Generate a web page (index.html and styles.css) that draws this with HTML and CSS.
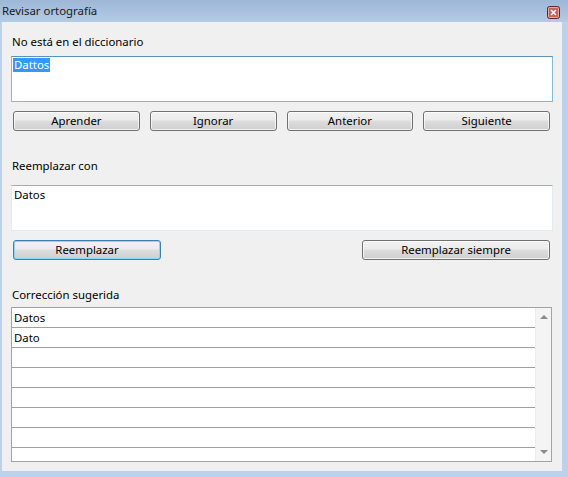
FILE: index.html
```html
<!DOCTYPE html>
<html lang="es">
<head>
<meta charset="utf-8">
<title>Revisar ortografía</title>
<link rel="stylesheet" href="styles.css">
</head>
<body>
<div class="window">
  <div class="titlebar">
    <span class="title">Revisar ortografía</span>
    <span class="close" aria-label="Cerrar">
      <svg width="13" height="13" viewBox="0 0 13 13">
        <rect x="0.5" y="0.5" width="12" height="12" rx="2" fill="#c9625a" stroke="#5a2a32"/>
        <rect x="1.5" y="1.5" width="10" height="10" rx="1" fill="none" stroke="#e9a79d"/>
        <path d="M4 4 L9 9 M9 4 L4 9" stroke="#ffffff" stroke-width="1.6"/>
      </svg>
    </span>
  </div>
  <div class="client">
    <div class="label first">No está en el diccionario</div>
    <div class="textbox focused"><span class="sel">Dattos</span></div>
    <div class="btnrow four">
      <button class="btn">Aprender</button>
      <button class="btn">Ignorar</button>
      <button class="btn">Anterior</button>
      <button class="btn">Siguiente</button>
    </div>
    <div class="label">Reemplazar con</div>
    <div class="textbox second">Datos</div>
    <div class="btnrow two">
      <button class="btn default">Reemplazar</button>
      <button class="btn wide">Reemplazar siempre</button>
    </div>
    <div class="label">Corrección sugerida</div>
    <div class="list">
      <div class="rows">
        <div class="row">Datos</div>
        <div class="row">Dato</div>
        <div class="row"></div>
        <div class="row"></div>
        <div class="row"></div>
        <div class="row"></div>
        <div class="row"></div>
        <div class="row last"></div>
      </div>
      <div class="scrollbar">
        <span class="arrow up"></span>
        <span class="arrow down"></span>
      </div>
    </div>
  </div>
</div>
</body>
</html>
```
FILE: styles.css
```css
* { box-sizing: border-box; }
html, body { margin: 0; padding: 0; }
body {
  width: 568px;
  height: 477px;
  overflow: hidden;
  font-family: "Noto Sans", "Open Sans", sans-serif;
  font-size: 11.4px;
  color: #000;
}
.window {
  width: 568px;
  height: 477px;
  background: #bcd2ea;
  display: flex;
  flex-direction: column;
}
.titlebar {
  height: 22px;
  background: linear-gradient(#9db7d6, #b4cbe6);
  display: flex;
  align-items: center;
  justify-content: space-between;
  padding: 0 8px 0 2px;
}
.title {
  color: #1a1a1a;
  line-height: 16px;
}
.close {
  display: flex;
  margin-top: 3px;
}
.client {
  margin: 0 6px 6px 2px;
  flex: 1;
  background: #f0f0f0;
  padding: 0 9px;
  display: flex;
  flex-direction: column;
}
.label {
  line-height: 16px;
  height: 16px;
  padding-left: 1px;
  margin-top: 27px;
  color: #000;
}
.label.first { margin-top: 12px; }
.textbox {
  margin-top: 6px;
  height: 46px;
  background: #fff;
  border: 1px solid #e3e9ef;
  border-top-color: #abadb3;
  padding: 1px 1px;
  line-height: 14px;
}
.textbox.focused {
  border-color: #8bb5d9;
  border-top-color: #5c93bc;
}
.textbox.second {
  margin-top: 11px;
  padding: 1px 2px;
  line-height: 16px;
}
.sel {
  background: #3399ff;
  color: #fff;
  display: inline-block;
  padding: 0 1px;
}
.btnrow {
  display: flex;
  margin: 9px 3px 0 2px;
  height: 20px;
}
.btnrow.four { gap: 10px; }
.btnrow.two { justify-content: space-between; }
.btn {
  font: inherit;
  color: #000;
  width: 127px;
  height: 100%;
  border: 1px solid #707070;
  border-radius: 3px;
  padding: 0;
  background: linear-gradient(#f2f2f2 0%, #ebebeb 45%, #dddddd 50%, #cfcfcf 100%);
  box-shadow: inset 0 0 0 1px rgba(255,255,255,0.7);
  line-height: 16px;
}
.btnrow.four .btn { flex: 1; }
.btn.default {
  width: 148px;
  border-color: #3c7fb1;
  box-shadow: inset 0 0 0 1px #8cd4f8;
}
.btn.wide { width: 188px; }
.list {
  margin-top: 4px;
  margin-right: 1px;
  height: 155px;
  border: 1px solid #a3a3a3;
  background: #fff;
  display: flex;
}
.rows { flex: 1; }
.row {
  height: 20px;
  border-bottom: 1px solid #a0a0a0;
  padding-left: 2px;
  line-height: 19px;
}
.row.last { border-bottom: none; }
.scrollbar {
  width: 16px;
  background: #f4f4f4;
  border-left: 1px solid #ececec;
  position: relative;
}
.arrow {
  position: absolute;
  left: 4px;
  width: 0;
  height: 0;
  border-left: 4px solid transparent;
  border-right: 4px solid transparent;
}
.arrow.up { top: 7px; border-bottom: 4px solid #8a8a8a; }
.arrow.down { bottom: 7px; border-top: 4px solid #8a8a8a; }
```
